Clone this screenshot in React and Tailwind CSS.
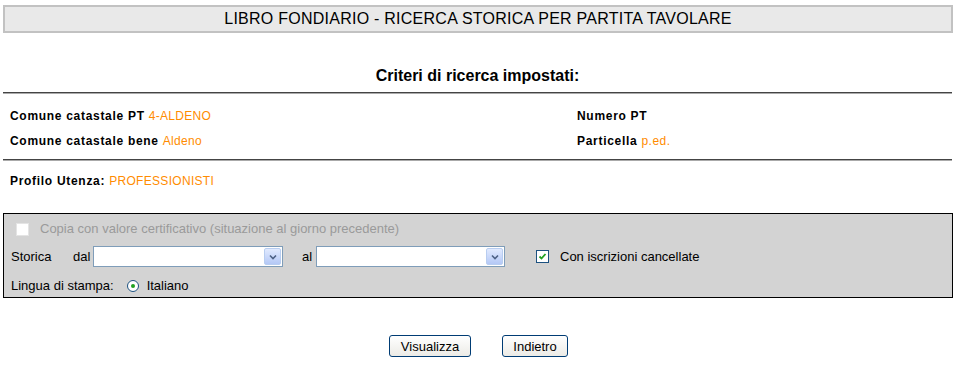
import React from "react";

function Select({ width }) {
  return (
    <div className="flex h-[21px] items-stretch border border-[#7f9db9] bg-white" style={{ width }}>
      <div className="flex-1" />
      <div className="m-[1px] flex w-[17px] items-center justify-center rounded-[2px] border border-[#b8cdf0] bg-gradient-to-b from-[#e1eafe] to-[#b4c8f6]">
        <svg width="8" height="6" viewBox="0 0 8 6">
          <path d="M1 1.5 L4 4.5 L7 1.5" stroke="#4d6185" strokeWidth="1.6" fill="none" />
        </svg>
      </div>
    </div>
  );
}

export default function App() {
  return (
    <div className="w-[960px] h-[373px] bg-white text-[12px] text-black" style={{ fontFamily: '"Liberation Sans", Arial, sans-serif' }}>
      <div className="pt-[5px] px-[3px]">
        <div className="flex h-[28px] w-[950px] items-center justify-center border-2 border-[#c2c2c2] bg-[#e9e9e9] text-[16px] tracking-[0.25px]">
          LIBRO FONDIARIO - RICERCA STORICA PER PARTITA TAVOLARE
        </div>
      </div>

      <div className="mt-[33px] pl-[3px]">
        <div className="w-[949px] text-center text-[16px] font-bold leading-[20px]">Criteri di ricerca impostati:</div>
        <div className="mt-[6px] h-[2px] w-[949px] border-t border-[#444] bg-[#aaa]" />
        <div className="flex pt-[15px] font-bold tracking-[0.7px]">
          <div className="w-[574px] pl-[7px]">
            <div className="leading-[14px]">Comune catastale PT <span className="font-normal tracking-[0.3px] text-[#ff8c00]">4-ALDENO</span></div>
            <div className="mt-[11px] leading-[14px]">Comune catastale bene <span className="font-normal tracking-[0.3px] text-[#ff8c00]">Aldeno</span></div>
          </div>
          <div>
            <div className="leading-[14px]">Numero PT</div>
            <div className="mt-[11px] leading-[14px]">Particella <span className="font-normal tracking-[0.5px] text-[#ff8c00]">p.ed.</span></div>
          </div>
        </div>
        <div className="mt-[11px] h-[2px] w-[949px] border-t border-[#444] bg-[#aaa]" />
        <div className="mt-[13px] pl-[7px] font-bold leading-[14px] tracking-[0.7px]">
          Profilo Utenza: <span className="font-normal tracking-[0.3px] text-[#ff8c00]">PROFESSIONISTI</span>
        </div>
      </div>

      <div className="ml-[3px] mt-[25px] h-[85px] w-[950px] border border-black bg-[#d3d3d3] pl-[7px] text-[13px]">
        <div className="flex h-[20px] items-center mt-[5px]">
          <div className="ml-[5px] h-[13px] w-[13px] border border-[#e4e4e4] bg-white" />
          <span className="ml-[11px] text-[#9a9a9a]">Copia con valore certificativo (situazione al giorno precedente)</span>
        </div>
        <div className="mt-[7px] flex h-[21px] items-center">
          <span className="w-[62px]">Storica</span>
          <span className="w-[20px]">dal</span>
          <Select width={190} />
          <span className="ml-[19px] w-[14px]">al</span>
          <Select width={189} />
          <div className="ml-[31px] flex h-[13px] w-[13px] items-center justify-center border border-[#1c5180] bg-white">
            <svg width="9" height="9" viewBox="0 0 9 9">
              <path d="M1.5 4.5 L3.5 6.5 L7.5 2" stroke="#21a121" strokeWidth="1.8" fill="none" />
            </svg>
          </div>
          <span className="ml-[11px]">Con iscrizioni cancellate</span>
        </div>
        <div className="mt-[11px] flex h-[16px] items-center">
          <span>Lingua di stampa:</span>
          <div className="ml-[13px] flex h-[12px] w-[12px] items-center justify-center rounded-full border border-[#1c5180] bg-white">
            <div className="h-[4px] w-[4px] rounded-full bg-[#21a121]" />
          </div>
          <span className="ml-[8px]">Italiano</span>
        </div>
      </div>

      <div className="mt-[37px] flex justify-center gap-[31px] pr-[3px]">
        <button className="h-[22px] w-[82px] rounded-[3px] border border-[#003c74] bg-gradient-to-b from-white to-[#ecebe6] text-[13px] leading-none" style={{ fontFamily: '"Liberation Sans", Arial, sans-serif' }}>Visualizza</button>
        <button className="h-[22px] w-[66px] rounded-[3px] border border-[#003c74] bg-gradient-to-b from-white to-[#ecebe6] text-[13px] leading-none" style={{ fontFamily: '"Liberation Sans", Arial, sans-serif' }}>Indietro</button>
      </div>
    </div>
  );
}
